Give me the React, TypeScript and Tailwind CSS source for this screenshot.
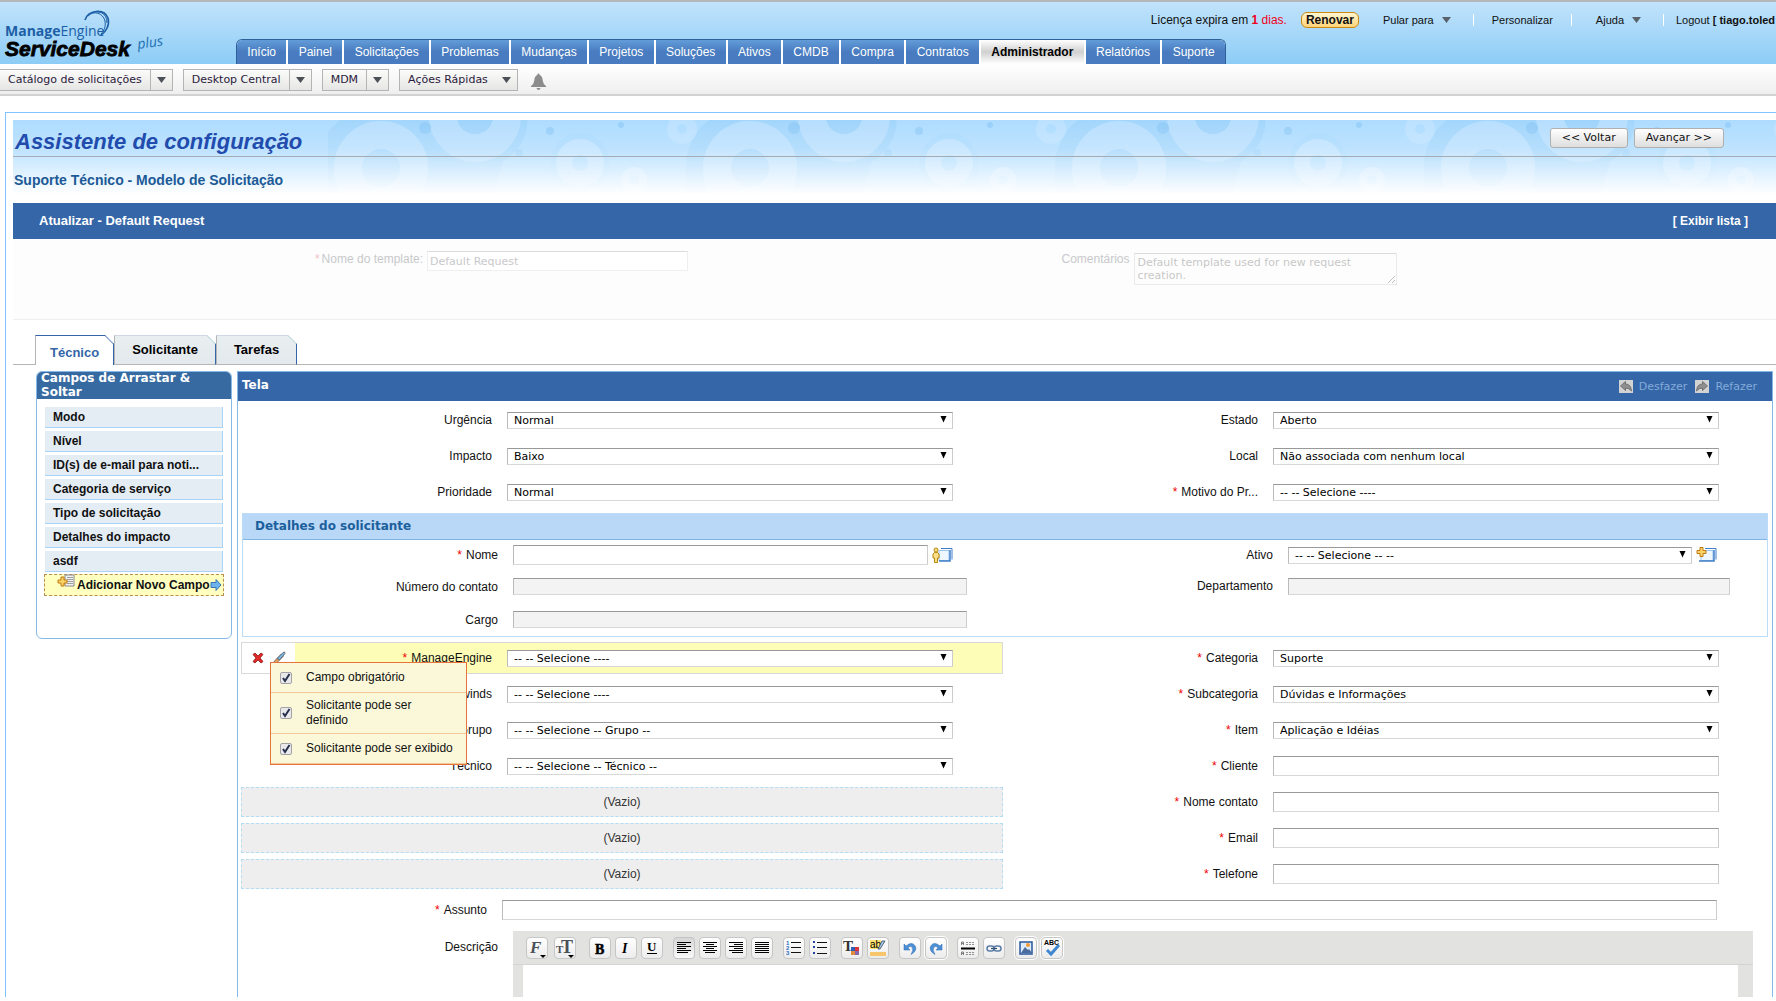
import { useState, type ReactNode } from "react";
import clsx from "clsx";

interface FieldDef {
  id: string;
  label: string;
  required?: boolean;
  value?: string;
}

const NAV = [
  "Início", "Painel", "Solicitações", "Problemas", "Mudanças", "Projetos", "Soluções", "Ativos",
  "CMDB", "Compra", "Contratos", "Administrador", "Relatórios", "Suporte",
];

const DRAG_FIELDS = [
  "Modo", "Nível", "ID(s) de e-mail para noti...", "Categoria de serviço",
  "Tipo de solicitação", "Detalhes do impacto", "asdf",
];

const TOP_LEFT: FieldDef[] = [
  { id: "urgencia", label: "Urgência", value: "Normal" },
  { id: "impacto", label: "Impacto", value: "Baixo" },
  { id: "prioridade", label: "Prioridade", value: "Normal" },
];

const TOP_RIGHT: FieldDef[] = [
  { id: "estado", label: "Estado", value: "Aberto" },
  { id: "local", label: "Local", value: "Não associada com nenhum local" },
  { id: "motivo", label: "Motivo do Pr...", required: true, value: "-- -- Selecione ----" },
];

const BOTTOM_LEFT: FieldDef[] = [
  { id: "solarwinds", label: "Solarwinds", value: "-- -- Selecione ----" },
  { id: "grupo", label: "Grupo", value: "-- -- Selecione -- Grupo --" },
  { id: "tecnico", label: "Técnico", value: "-- -- Selecione -- Técnico --" },
];

const BOTTOM_RIGHT: FieldDef[] = [
  { id: "categoria", label: "Categoria", required: true, value: "Suporte" },
  { id: "subcategoria", label: "Subcategoria", required: true, value: "Dúvidas e Informações" },
  { id: "item", label: "Item", required: true, value: "Aplicação e Idéias" },
  { id: "cliente", label: "Cliente", required: true },
  { id: "nome-contato", label: "Nome contato", required: true },
  { id: "email", label: "Email", required: true },
  { id: "telefone", label: "Telefone", required: true },
];

const FIELD_OPTIONS = ["Campo obrigatório", "Solicitante pode ser\ndefinido", "Solicitante pode ser exibido"];

const VERDANA = "font-['DejaVu_Sans',sans-serif] text-[11px]";
const BOX = "border border-t-[#999] border-l-[#bbb] border-r-[#ccc] border-b-[#d8d8d8]";

function Logo() {
  return (
    <svg width="170" height="60" viewBox="0 0 170 60" role="img" aria-label="ManageEngine ServiceDesk Plus">
      <g fill="none" stroke="#1d5fa6">
        <path d="M85 18C88 8 104 6 108 16C110 23 106 30 101 33" strokeWidth="1.6" />
        <path d="M88 14C94 8 103 11 105 19C106 25 104 29 101 32" strokeWidth="1" />
        <path d="M91 11C98 8 107 10 107 21" strokeWidth="1" />
      </g>
      <text x="5" y="34" fill="#1d5fa6" fontFamily="'Open Sans', sans-serif" fontSize="14">
        <tspan fontWeight="700">Manage</tspan>Engine
      </text>
      <text x="5" y="54" fill="#000" stroke="#000" strokeWidth="0.8" fontFamily="'Liberation Sans', sans-serif" fontSize="21" fontWeight="700" fontStyle="italic">ServiceDesk</text>
      <text x="138" y="47" fill="#1d6fb0" fontFamily="'Open Sans', sans-serif" fontSize="14" fontStyle="italic" transform="rotate(-8 138 47)">plus</text>
    </svg>
  );
}

function Arrow({ className }: { className?: string }) {
  return (
    <svg width="9" height="6" viewBox="0 0 9 6" className={className} aria-hidden="true">
      <path d="M0 0h9L4.500 6z" fill="currentColor" />
    </svg>
  );
}

// ring pattern behind the page title, repeats every 369px
function BannerRings() {
  return (
    <svg className="absolute inset-0 h-full w-full" aria-hidden="true">
      <defs>
        <pattern id="rings" width="369" height="83" patternUnits="userSpaceOnUse" x="278">
          <path d="M26 83V40Q32 6 60 -6H236Q240 22 212 42L200 83z" fill="#8cc8f6" opacity="0.3" />
          <g opacity="0.5">
            <circle cx="90" cy="48" r="33" fill="none" stroke="#cbe8ff" strokeWidth="28" />
            <circle cx="90" cy="48" r="18" fill="#a5d6fb" />
            <circle cx="184" cy="-4" r="32" fill="none" stroke="#c8e6ff" strokeWidth="28" />
            <circle cx="184" cy="-4" r="18" fill="#9bd2f9" />
            <circle cx="134" cy="8" r="6" fill="#7fc2f4" />
            <circle cx="228" cy="33" r="4" fill="#8ecbf7" />
            <circle cx="259" cy="11" r="4" fill="#7fc2f4" />
            <circle cx="289" cy="43" r="30" fill="#9bd2f9" opacity="0.5" />
            <circle cx="289" cy="43" r="16" fill="none" stroke="#cbe8ff" strokeWidth="16" />
            <circle cx="343" cy="60" r="9" fill="none" stroke="#d5ecff" strokeWidth="8" />
            <circle cx="22" cy="9" r="10" fill="none" stroke="#c8e6ff" strokeWidth="10" />
            <circle cx="330" cy="5" r="3" fill="#7fc2f4" />
          </g>
        </pattern>
        <linearGradient id="fade" x1="0" y1="0" x2="0" y2="1">
          <stop offset="0" stopColor="#fff" stopOpacity="0" />
          <stop offset="0.35" stopColor="#fff" stopOpacity="0.2" />
          <stop offset="0.9" stopColor="#fff" />
        </linearGradient>
      </defs>
      <rect x="315" width="100%" height="100%" fill="url(#rings)" />
      <rect width="100%" height="100%" fill="url(#fade)" />
    </svg>
  );
}

function SelectBox({ id, value, className }: { id: string; value: string; className?: string }) {
  return (
    <div className={clsx("relative min-w-0", className)}>
      <select id={id} className={clsx("block h-[17px] w-full appearance-none rounded-none bg-white pr-5 pl-1.5 leading-[15px] text-black", VERDANA, BOX)}>
        <option>{value}</option>
      </select>
      <svg width="7" height="7" viewBox="0 0 7 7" className="pointer-events-none absolute top-1 right-1.5" aria-hidden="true">
        <path d="M0.500 0h6L3.500 6.500z" fill="#000" />
      </svg>
    </div>
  );
}

function FieldLabel({ id, label, required }: FieldDef) {
  return (
    <label htmlFor={id} className="text-right whitespace-nowrap">
      {required && <span className="mr-1 text-[#e00]">*</span>}
      {label}
    </label>
  );
}

function FieldRow({ field }: { field: FieldDef }) {
  return (
    <div className="grid h-9 grid-cols-[251fr_446fr] items-center gap-x-[15px] pr-[50px]">
      <FieldLabel {...field} />
      {field.value
        ? <SelectBox id={field.id} value={field.value} />
        : <input id={field.id} type="text" className={clsx("h-5 w-full bg-white px-1", VERDANA, BOX)} />}
    </div>
  );
}

function DetailRow({ field, children, className }: { field: FieldDef; children: ReactNode; className?: string }) {
  return (
    <div className={clsx("grid items-center gap-x-[15px]", className)}>
      <FieldLabel {...field} />
      {children}
    </div>
  );
}

function DisabledBox({ id }: { id: string }) {
  return <input id={id} type="text" disabled className={clsx("h-[17px] w-full bg-[#f3f3f3]", BOX)} />;
}

function ToolButton({ label, children, pressed, framed }: { label: string; children: ReactNode; pressed?: boolean; framed?: boolean }) {
  return (
    <button
      type="button"
      aria-label={label}
      className={clsx(
        "flex h-[22px] w-[22px] items-center justify-center rounded border",
        pressed ? "border-[#c4c4c4] bg-linear-to-b from-[#d6d6d6] to-[#fafafa]" : "border-[#c6c6c6] bg-linear-to-b from-white to-[#ececec]",
        framed && "outline outline-1 outline-white",
      )}
    >
      <svg width="20" height="20" viewBox="0 0 20 20" aria-hidden="true">{children}</svg>
    </button>
  );
}

function Lines({ rows }: { rows: [number, number][] }) {
  return <path d={rows.map(([x, w], i) => `M${x} ${4.5 + i * 2}h${w}`).join("")} stroke="#000" strokeWidth="1.2" fill="none" />;
}

const SERIF = "'Liberation Serif', serif";

function EditorToolbar() {
  return (
    <div className="flex h-[34px] items-center gap-[10px] border-b border-[#d4d4d4] pl-[13px]">
      <div className="flex gap-1.5 pr-[3px]">
        <ToolButton label="Fonte">
          <text x="3" y="15" fontFamily={SERIF} fontSize="17" fontStyle="italic" fontWeight="700" fill="#4a5158">F</text>
          <path d="M13 17h6l-3 3z" />
        </ToolButton>
        <ToolButton label="Tamanho">
          <text x="1" y="15" fontFamily={SERIF} fontSize="11" fontWeight="700" fill="#4a5158">T</text>
          <text x="6" y="15" fontFamily={SERIF} fontSize="18" fontWeight="700" fill="#4a5158">T</text>
          <path d="M13 17h6l-3 3z" />
        </ToolButton>
      </div>
      <div className="flex gap-1">
        <ToolButton label="Negrito"><text x="5" y="16" fontFamily={SERIF} fontSize="14" fontWeight="700" stroke="#000" strokeWidth="0.5">B</text></ToolButton>
        <ToolButton label="Itálico"><text x="6" y="15" fontFamily={SERIF} fontSize="14" fontStyle="italic" fontWeight="700">I</text></ToolButton>
        <ToolButton label="Sublinhado"><text x="5" y="13" fontFamily={SERIF} fontSize="13" fontWeight="700">U</text><path d="M5 15.500h10" stroke="#000" /></ToolButton>
      </div>
      <div className="flex gap-1">
        <ToolButton label="Alinhar à esquerda" pressed><Lines rows={[[3, 14], [3, 9], [3, 14], [3, 9], [3, 14], [3, 11]]} /></ToolButton>
        <ToolButton label="Centralizar"><Lines rows={[[3, 14], [6, 8], [3, 14], [6, 8], [3, 14], [5, 10]]} /></ToolButton>
        <ToolButton label="Alinhar à direita"><Lines rows={[[3, 14], [8, 9], [3, 14], [8, 9], [3, 14], [6, 11]]} /></ToolButton>
        <ToolButton label="Justificar"><Lines rows={[[3, 14], [3, 14], [3, 14], [3, 14], [3, 14], [3, 14]]} /></ToolButton>
      </div>
      <div className="flex gap-1">
        <ToolButton label="Lista numerada">
          <g fontFamily="'Liberation Sans', sans-serif" fontSize="6" fontWeight="700" fill="#2a6fc0">
            <text x="2" y="7">1</text><text x="2" y="12">2</text><text x="2" y="17">3</text>
          </g>
          <path d="M7 4.500h10M7 9.500h10M7 14.500h10" stroke="#111" strokeWidth="1.200" />
        </ToolButton>
        <ToolButton label="Lista com marcadores">
          <path d="M3 3h2v2h-2zM3 8h2v2h-2zM3 14h2v2h-2z" fill="#2743a0" />
          <path d="M7 4.500h10M7 9.500h10M7 15.500h10" stroke="#111" strokeWidth="1.200" />
        </ToolButton>
      </div>
      <div className="flex gap-1">
        <ToolButton label="Cor do texto">
          <text x="1" y="13" fontFamily={SERIF} fontSize="15" fontWeight="700" fill="#333">T</text>
          <path d="M9 9h4v4h-4z" fill="#2f5fb5" /><path d="M13 9h4v4h-4z" fill="#d9353a" />
          <path d="M9 13h4v4h-4z" fill="#e08a3c" /><path d="M13 13h4v4h-4z" fill="#8565ac" />
        </ToolButton>
        <ToolButton label="Cor de fundo">
          <path d="M2 2h11v9H2z" fill="#ffe36e" />
          <text x="2" y="10" fontFamily="'Liberation Sans', sans-serif" fontSize="10">ab</text>
          <path d="M10 11L14 3h3L12 11z" fill="#a8cdf0" stroke="#345" strokeWidth="0.800" />
          <path d="M2 14h16v4H2z" fill="#f7c66b" />
        </ToolButton>
      </div>
      <div className="flex gap-1">
        <ToolButton label="Desfazer edição"><path d="M4 6v6h6L8 10Q10 7 12 9Q14 12 11 16.500Q17 13 15.500 8.500Q13 4 9 6L6 8z" fill="#4a8fd6" stroke="#2c6bb0" strokeWidth="0.500" /></ToolButton>
        <ToolButton label="Refazer edição" framed><path d="M16 6v6h-6L12 10Q10 7 8 9Q6 12 9 16.500Q3 13 4.500 8.500Q7 4 11 6L14 8z" fill="#4a8fd6" stroke="#2c6bb0" strokeWidth="0.500" /></ToolButton>
      </div>
      <div className="flex gap-1">
        <ToolButton label="Linha horizontal">
          <path d="M3.500 7V4h2v3M3.500 5.500h2M3.500 17v-3h2v3M3.500 15.500h2" stroke="#666" fill="none" strokeWidth="0.800" />
          <path d="M8 4.500h9M8 6.500h9M8 14.500h9M8 16.500h9" stroke="#777" strokeWidth="0.800" strokeDasharray="2 1" />
          <path d="M3 10.500h14" stroke="#000" strokeWidth="2" />
        </ToolButton>
        <ToolButton label="Link">
          <rect x="3" y="8" width="7" height="5" rx="2.500" fill="none" stroke="#5c7ea6" strokeWidth="1.500" />
          <rect x="10" y="8" width="7" height="5" rx="2.500" fill="none" stroke="#5c7ea6" strokeWidth="1.500" />
          <path d="M7 10.500h6" stroke="#34506f" strokeWidth="1.200" />
        </ToolButton>
      </div>
      <div className="flex gap-1">
        <ToolButton label="Imagem" framed>
          <path d="M4 4h12v12H4z" fill="#dcebfb" stroke="#2a579a" strokeWidth="1.500" />
          <circle cx="12" cy="7" r="2" fill="#f09a35" />
          <path d="M5 15L9 9l3 3 1-1 3 4z" fill="#4a6c9c" />
        </ToolButton>
        <ToolButton label="Verificar ortografia" framed>
          <text x="2" y="7" fontFamily="'Liberation Sans', sans-serif" fontSize="7" fontWeight="700">ABC</text>
          <path d="M5 12l4 4 8-9" stroke="#3f86cf" strokeWidth="3" fill="none" />
        </ToolButton>
      </div>
    </div>
  );
}

function Banner() {
  return (
    <div className="relative h-[83px] bg-[#aedcff]">
      <BannerRings />
      <div className="relative flex h-[37px] items-center justify-between border-b border-[#a5abb3] pr-[52px]">
        <h1 className="pt-2 pl-0.5 text-[22px] font-bold text-[#214cad] italic">Assistente de configuração</h1>
        <div className="flex gap-1.5 pb-px">
          {["<< Voltar", "Avançar >>"].map((t) => (
            <button key={t} type="button" className={clsx("h-5 rounded-[3px] border border-[#b0b0b0] bg-linear-to-b from-white to-[#dedede] px-[11px] leading-[18px]", VERDANA)}>{t}</button>
          ))}
        </div>
      </div>
      <h2 className="relative pt-[13px] pl-px text-sm leading-5 font-bold text-[#1c5a97]">Suporte Técnico - Modelo de Solicitação</h2>
    </div>
  );
}

function TopBar() {
  return (
    <header className="flex h-16 justify-between border-t-2 border-[#b3b7b9] bg-linear-to-b from-[#c1e3fb] to-[#8cccf6]">
      <div className="flex shrink-0 items-end">
        <div className="w-[236px] self-start"><Logo /></div>
        <nav className="flex h-[25px] w-[990px] gap-0.5 overflow-hidden rounded-t-md border-t border-r border-l border-[#2f6199] bg-white">
          {NAV.map((n) => (
            <a
              key={n}
              href="#"
              className={clsx(
                "flex flex-auto items-center justify-center whitespace-nowrap",
                n === "Administrador"
                  ? "bg-linear-to-b from-white via-[#d0d0d0] to-white font-bold text-black"
                  : "bg-linear-to-b from-[#639cd9] to-[#487bbf] to-50% text-white",
              )}
            >
              {n}
            </a>
          ))}
        </nav>
      </div>
      <div className="-ml-20 flex h-9 shrink-0 items-center text-[11px] whitespace-nowrap">
        <span className="text-xs">Licença expira em <span className="text-[#f00020]"><b>1</b> dias.</span></span>
        <a href="#" className="ml-3.5 flex h-4 items-center rounded-md border border-[#c98a12] bg-linear-to-b from-[#fff6cf] to-[#ffd375] px-1 text-xs font-bold">Renovar</a>
        <a href="#" className="ml-6 flex items-center gap-2">Pular para <Arrow className="text-[#59616a]" /></a>
        <span className="ml-[22px] h-3 w-px bg-white" />
        <a href="#" className="ml-[18px]">Personalizar</a>
        <span className="ml-[18px] h-3 w-px bg-white" />
        <a href="#" className="ml-6 flex items-center gap-2">Ajuda <Arrow className="text-[#59616a]" /></a>
        <span className="ml-[22px] h-3 w-px bg-white" />
        <a href="#" className="ml-3 w-[100px]">Logout <b>[ tiago.toled</b></a>
      </div>
    </header>
  );
}

function MenuBar() {
  return (
    <div className="flex h-8 items-center border-b-2 border-[#d2d2d2] bg-linear-to-b from-white to-[#efefef]">
      <div className="flex items-center gap-[10px]">
        {["Catálogo de solicitações", "Desktop Central", "MDM", "Ações Rápidas"].map((m, i) => (
          <button
            key={m}
            type="button"
            className={clsx("mt-px flex h-[22px] items-center border border-[#b4b4b4] bg-linear-to-b from-[#fbfbfa] to-[#e6e6e5] text-[#2a1a3c]", i === 0 && "border-l-0", VERDANA)}
          >
            <span className={clsx("flex h-full items-center px-2", i < 3 && "border-r border-[#b4b4b4]")}>{m}</span>
            <Arrow className="mx-1.5 text-[#4c5158]" />
          </button>
        ))}
      </div>
      <svg width="17" height="17" viewBox="0 0 17 17" className="mt-1 ml-3 text-[#8c8c8c]" role="img" aria-label="Notificações">
        <path d="M8.500 0.500q1.200 0 1.200 1.400Q12.500 3 12.700 7.500Q13 11 16 13v1H1v-1Q4 11 4.300 7.500Q4.500 3 7.300 1.900Q7.300 0.500 8.500 0.500zM6.500 15h4q-.5 2-2 2t-2-2z" fill="currentColor" />
      </svg>
    </div>
  );
}

function TemplateForm() {
  return (
    <div className="grid h-[81px] grid-cols-2 items-start border-b border-[#efefef] bg-[#fcfdfc] pt-3 text-[#c9c9cc]">
      <div className="grid grid-cols-[410px_1fr] gap-x-1">
        <label htmlFor="template" className="text-right"><span className="mr-0.5 text-[#f3c2c9]">*</span>Nome do template:</label>
        <input id="template" defaultValue="Default Request" className={clsx("h-5 w-[261px] border border-[#efefef] border-t-[#dcdcdc] bg-white px-0.5", VERDANA)} />
      </div>
      <div className="grid grid-cols-[235px_1fr] gap-x-1">
        <label htmlFor="comments" className="text-right">Comentários</label>
        <textarea id="comments" rows={2} defaultValue="Default template used for new request creation." className={clsx("mt-0.5 h-8 w-[263px] border border-[#d0d0d0] border-t-[#aaa] bg-white px-[3px] pt-0.5 leading-[13px] text-[#777] opacity-40", VERDANA)} />
      </div>
    </div>
  );
}

function TabStrip() {
  const [tab, setTab] = useState("Técnico");
  return (
    <div className="mt-[15px] flex h-[30px] items-end">
      <div className="h-px w-[22px] bg-[#b5b5b5]" />
      <div className="flex h-full" role="tablist">
        {["Técnico", "Solicitante", "Tarefas"].map((t) => (
          <button
            key={t}
            type="button"
            role="tab"
            aria-selected={tab === t}
            onClick={() => setTab(t)}
            className={clsx(
              "relative h-full border-t border-r border-l border-l-[#b5b5b5] border-r-[#3566a8] text-[13px] font-bold",
              tab === t ? "border-t-[#3566a8] bg-white px-3.5 pt-1 text-[#3566a8]" : "border-b border-t-[#d0d6e6] border-b-[#b5b5b5] bg-linear-to-b from-[#e9eef1] to-[#e4e9ed] px-[17px] text-black",
            )}
          >
            {t}
            <svg width="9" height="9" viewBox="0 0 9 9" className="absolute -top-px -right-px" aria-hidden="true">
              <path d="M0 0h9v9z" fill="#fff" />
              <path d="M0 0.500L8.500 9" stroke={tab === t ? "#3566a8" : "#a9cfd6"} fill="none" />
            </svg>
          </button>
        ))}
      </div>
      <div className="h-px flex-1 bg-[#b5b5b5]" />
    </div>
  );
}

function Sidebar() {
  return (
    <aside className="h-[268px] w-[196px] shrink-0 overflow-hidden rounded-md border border-[#86b9e8] font-bold">
      <h3 className="-mx-px -mt-px bg-[#376aa0] px-[5px] font-['DejaVu_Sans',sans-serif] text-xs leading-[14px] text-white">Campos de Arrastar &amp; Soltar</h3>
      <ul className="mt-2 flex flex-col gap-[3px] px-2">
        {DRAG_FIELDS.map((f) => (
          <li key={f} className="h-[21px] border-r border-b border-[#a9d4f8] bg-[#e4ecf4] pl-2 leading-5">{f}</li>
        ))}
      </ul>
      <button type="button" className="mt-0.5 ml-[7px] flex h-[22px] w-[180px] items-center border border-dashed border-[#b98c50] bg-[#ffffc0] pl-3 whitespace-nowrap">
        <svg width="18" height="14" viewBox="0 0 18 14" className="mr-0.5 mb-2 shrink-0" aria-hidden="true">
          <path d="M8 1h9v11H8z" fill="#f2f2f2" stroke="#8a8a8a" />
          <path d="M10 3.500h6M10 5.500h6M10 7.500h6M10 9.500h6" stroke="#888" strokeWidth="0.800" />
          <path d="M4 3h3v3h3v3H7v3H4V9H1V6h3z" fill="#fbd265" stroke="#c07a12" />
        </svg>
        Adicionar Novo Campo
        <svg width="12" height="12" viewBox="0 0 12 12" className="shrink-0" aria-hidden="true">
          <path d="M1 3.500h5v-3l5 5.500-5 5.500v-3H1z" fill="#6db3ee" stroke="#3a76b5" />
        </svg>
      </button>
    </aside>
  );
}

function HistoryLink({ label, flip }: { label: string; flip?: boolean }) {
  return (
    <button type="button" className={clsx("flex items-center gap-1.5 text-[#83abd9]", VERDANA)}>
      <svg width="14" height="13" viewBox="0 0 14 13" className={flip ? "-scale-x-100" : undefined} aria-hidden="true">
        <path d="M0 0h14v13H0z" fill="#d3d3d3" />
        <path d="M1.500 6L6.500 1.500V4Q12 4 12.500 11Q10 8 6.500 8v2.500z" fill="#8f8f8f" stroke="#666" strokeWidth="0.800" />
      </svg>
      {label}
    </button>
  );
}

function RequesterDetails() {
  const left = "grid-cols-[255px_1fr] pr-[51px]";
  const right = "grid-cols-[255px_1fr] pr-[37px]";
  return (
    <section className="mx-1 mt-[3px] border border-[#b9dcf8]">
      <h3 className="h-[26px] border-b border-[#82b4e6] bg-[#b9d7f6] pl-3 font-['DejaVu_Sans',sans-serif] text-xs leading-[25px] font-bold text-[#1b5f9c]">Detalhes do solicitante</h3>
      <div className="grid grid-cols-[775fr_749fr]">
        <div>
          <DetailRow field={{ id: "nome", label: "Nome", required: true }} className={clsx("h-[30px]", left)}>
            <div className="flex items-center gap-1 pr-3.5">
              <input id="nome" type="text" className={clsx("h-5 min-w-0 flex-1 bg-white px-1", VERDANA, BOX)} />
              <svg width="21" height="16" viewBox="0 0 21 16" role="img" aria-label="Escolher solicitante">
                <path d="M9 1.500h11v11" fill="none" stroke="#3f7fc8" />
                <path d="M7 3.500h10v10H7z" fill="#eef6ff" stroke="#9cc4ee" /><path d="M7 14h11V3" fill="none" stroke="#3f7fc8" strokeWidth="1.500" />
                <circle cx="4" cy="3" r="2" fill="#fbe089" stroke="#b8860b" />
                <path d="M2.500 5.500h3l1.500 1.500v4H5.500v4.500h-3V11H1V7z" fill="#fbe089" stroke="#b8860b" />
              </svg>
            </div>
          </DetailRow>
          <DetailRow field={{ id: "numero", label: "Número do contato" }} className={clsx("h-[33px]", left)}><DisabledBox id="numero" /></DetailRow>
          <DetailRow field={{ id: "cargo", label: "Cargo" }} className={clsx("h-[33px]", left)}><DisabledBox id="cargo" /></DetailRow>
        </div>
        <div>
          <DetailRow field={{ id: "ativo", label: "Ativo" }} className={clsx("h-[30px]", right)}>
            <div className="flex items-center gap-1 pr-[13px]">
              <SelectBox id="ativo" value="-- -- Selecione -- --" className="flex-1" />
              <svg width="21" height="16" viewBox="0 0 21 16" role="img" aria-label="Adicionar ativo">
                <path d="M9 1.500h11v11" fill="none" stroke="#3f7fc8" />
                <path d="M5 3.500h12v10H5z" fill="#eef6ff" stroke="#9cc4ee" /><path d="M3 14h15V3" fill="none" stroke="#3f7fc8" strokeWidth="1.500" />
                <path d="M4 .5h3v3h3v3H7v3H4v-3H1v-3h3z" fill="#fbd265" stroke="#c07a12" />
              </svg>
            </div>
          </DetailRow>
          <DetailRow field={{ id: "depto", label: "Departamento" }} className={clsx("h-8", right)}><DisabledBox id="depto" /></DetailRow>
        </div>
      </div>
    </section>
  );
}

function FieldMenu() {
  return (
    <div className="absolute top-[22px] left-[29px] z-10 w-[197px] border border-[#e8743b] bg-[#fbf8da]">
      {FIELD_OPTIONS.map((o) => (
        <label key={o} className="relative flex min-h-[30px] items-center gap-[14px] border-b border-[#f3c898] py-[5px] pr-1 pl-[9px] leading-[15px] whitespace-pre-line">
          <input type="checkbox" defaultChecked className="peer sr-only" />
          <svg width="12" height="12" viewBox="0 0 12 12" className="shrink-0 peer-checked:[&>path]:opacity-100 [&>path]:opacity-0" aria-hidden="true">
            <rect x="0.500" y="0.500" width="11" height="11" rx="1.500" fill="#e9e9ec" stroke="#a3a3a6" />
            <path d="M3 6l2 3 4.500-7" stroke="#26304d" strokeWidth="2" fill="none" />
          </svg>
          <span>{o}</span>
        </label>
      ))}
    </div>
  );
}

function ActiveField() {
  return (
    <div className="relative h-9 py-0.5">
      <div className="h-8 border border-[#d9d9d9]">
        <div className="flex h-full">
          <div className="flex w-[53px] shrink-0 items-center gap-2 pl-[10px]">
            <svg width="12" height="12" viewBox="0 0 12 12" role="img" aria-label="Remover">
              <path d="M1 2.500L3 1l3 3 3-3 2 1.500L8 6l3 3.500L9 11 6 8l-3 3-2-1.500L4 6z" fill="#e02a2a" stroke="#8e1414" strokeWidth="0.800" />
            </svg>
            <svg width="15" height="15" viewBox="0 0 15 15" role="img" aria-label="Editar">
              <path d="M1 14l1.500-4 7-7 2 2-7 7z" fill="#f0a35a" stroke="#555" strokeWidth="0.800" />
              <path d="M5 7.500L11 1.500l1.500-.5L13 2.500 7.500 9z" fill="#78b7ea" stroke="#555" strokeWidth="0.800" />
            </svg>
          </div>
          <div className="grid flex-1 grid-cols-[197px_1fr] items-center gap-x-[15px] bg-[#fdfdb8] pr-[49px]">
            <FieldLabel id="manageengine" label="ManageEngine" required />
            <SelectBox id="manageengine" value="-- -- Selecione ----" />
          </div>
        </div>
      </div>
      <FieldMenu />
    </div>
  );
}

function Canvas() {
  return (
    <section className="min-w-0 flex-1 border-t border-r border-l border-[#86b9e8]">
      <div className="flex h-[29px] items-center justify-between bg-[#3566a8] pr-[15px] pl-1 text-white">
        <h3 className="pb-1 font-['DejaVu_Sans',sans-serif] text-xs font-bold">Tela</h3>
        <div className="flex gap-2">
          <HistoryLink label="Desfazer" />
          <HistoryLink label="Refazer" flip />
        </div>
      </div>
      <div className="grid grid-cols-2 gap-x-1 px-[3px] pt-px">
        <div>{TOP_LEFT.map((f) => <FieldRow key={f.id} field={f} />)}</div>
        <div>{TOP_RIGHT.map((f) => <FieldRow key={f.id} field={f} />)}</div>
      </div>
      <RequesterDetails />
      <div className="mt-[3px] grid grid-cols-2 gap-x-1 px-[3px]">
        <div>
          <ActiveField />
          {BOTTOM_LEFT.map((f) => <FieldRow key={f.id} field={f} />)}
          <div className="flex flex-col gap-1.5 py-[3px]">
            {[0, 1, 2].map((i) => (
              <div key={i} className="flex h-[30px] items-center justify-center border border-dashed border-[#b5dcf5] bg-[#eee] text-[#333]">(Vazio)</div>
            ))}
          </div>
        </div>
        <div>{BOTTOM_RIGHT.map((f) => <FieldRow key={f.id} field={f} />)}</div>
      </div>
      <div className="grid h-9 grid-cols-[249px_1fr] items-center gap-x-[15px] pr-[55px]">
        <FieldLabel id="assunto" label="Assunto" required />
        <input id="assunto" type="text" className={clsx("h-5 w-full bg-white px-1", VERDANA, BOX)} />
      </div>
      <div className="mt-[3px] grid grid-cols-[260px_1fr] gap-x-[15px] pr-[19px]">
        <label htmlFor="descricao" className="pt-2 text-right">Descrição</label>
        <div className="bg-[#e2e2e0]">
          <EditorToolbar />
          <div className="pr-[15px] pl-[10px]">
            <textarea id="descricao" className="block h-8 w-full resize-none bg-white px-1" />
          </div>
        </div>
      </div>
    </section>
  );
}

export default function App() {
  return (
    <div className="overflow-hidden bg-white font-['Liberation_Sans',Arial,sans-serif] text-xs leading-4 text-[#111]">
      <TopBar />
      <MenuBar />
      <main className="mt-4 ml-[5px] border-t border-l border-[#7fc4ff] pt-[7px] pl-[7px]">
        <Banner />
        <div className="flex h-9 items-center justify-between bg-[#3566a8] pr-[28px] pl-[26px] font-bold text-white">
          <h2 className="text-[13px]">Atualizar - Default Request</h2>
          <a href="#">[ Exibir lista ]</a>
        </div>
        <TemplateForm />
        <TabStrip />
        <div className="mt-1.5 flex items-start gap-[5px] pr-[3px] pl-[23px]">
          <Sidebar />
          <Canvas />
        </div>
      </main>
    </div>
  );
}
